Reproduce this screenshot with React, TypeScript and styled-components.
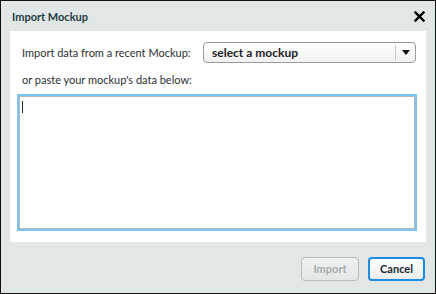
import React from 'react';
import styled, { createGlobalStyle } from 'styled-components';

const GlobalStyle = createGlobalStyle`
  html, body {
    margin: 0;
    padding: 0;
    background: #e1e6e6;
  }
  * {
    box-sizing: border-box;
  }
`;

const Dialog = styled.div`
  width: 436px;
  height: 294px;
  border: 1px solid #111;
  background: #e1e6e6;
  display: flex;
  flex-direction: column;
  font-family: Lato, "Open Sans", sans-serif;
  color: #1e2a2e;
`;

const Header = styled.div`
  height: 30px;
  display: flex;
  align-items: center;
  justify-content: space-between;
  padding: 0 10px 0 11px;
`;

const Title = styled.div`
  font-size: 11px;
  font-weight: 700;
  color: #1f3b44;
`;

const CloseButton = styled.button`
  border: none;
  background: none;
  padding: 0;
  width: 12px;
  height: 12px;
  display: flex;
  align-items: center;
  justify-content: center;
  cursor: pointer;
`;

const Panel = styled.div`
  margin: 0 9px;
  height: 211px;
  background: #fff;
  padding: 11px 7px 8px 7px;
  display: flex;
  flex-direction: column;
`;

const Row = styled.div`
  display: flex;
  align-items: center;
  justify-content: space-between;
  padding: 0 3px 0 5px;
  height: 21px;
`;

const Label = styled.div`
  font-size: 11px;
  color: #2a2f31;
`;

const Select = styled.div`
  width: 213px;
  height: 21px;
  border: 1px solid #9a9a9a;
  border-radius: 4px;
  background: linear-gradient(#ffffff, #f1f1f1);
  display: flex;
  align-items: center;
`;

const SelectText = styled.div`
  flex: 1;
  padding-left: 8px;
  font-size: 12px;
  font-weight: 700;
  color: #222;
`;

const SelectArrow = styled.div`
  width: 20px;
  height: 15px;
  border-left: 1px solid #c8c8c8;
  display: flex;
  align-items: center;
  justify-content: center;
`;

const Hint = styled(Label)`
  padding-left: 5px;
  margin-top: 10px;
  margin-bottom: 8px;
`;

const TextArea = styled.textarea`
  width: 400px;
  height: 137px;
  margin: 0;
  border: 2px solid #7cc5ee;
  box-shadow: inset 1px 1px 0 #b8b8b8, inset -1px -1px 0 #b8b8b8;
  outline: none;
  resize: none;
  padding: 3px 4px;
  font-family: Lato, sans-serif;
  font-size: 12px;
  caret-color: #000;
`;

const Caret = styled.div`
  position: absolute;
  left: 22px;
  top: 101px;
  width: 1px;
  height: 12px;
  background: #1a2a2a;
`;

const Footer = styled.div`
  flex: 1;
  display: flex;
  align-items: center;
  justify-content: flex-end;
  gap: 9px;
  padding: 2px 10px 0 0;
`;

const Button = styled.button<{ primary?: boolean }>`
  height: 24px;
  padding: 0;
  width: ${p => (p.primary ? '57px' : '58px')};
  border-radius: 4px;
  font-family: Lato, sans-serif;
  font-size: 11px;
  font-weight: 700;
  border: ${p => (p.primary ? '2px solid #1e8ce3' : '1px solid #b9bdbd')};
  color: ${p => (p.primary ? '#1c2a30' : '#a8acac')};
  background: ${p => (p.primary ? 'linear-gradient(#ffffff, #eaeded)' : 'linear-gradient(#eef1f1, #e3e7e7)')};
`;

const Wrap = styled.div`
  position: relative;
`;

export default function App() {
  return (
    <Wrap>
      <GlobalStyle />
      <Dialog>
        <Header>
          <Title>Import Mockup</Title>
          <CloseButton aria-label="close">
            <svg width="11" height="11" viewBox="0 0 11 11">
              <path d="M1.5 1.5 L9.5 9.5 M9.5 1.5 L1.5 9.5" stroke="#000" strokeWidth="2.4" strokeLinecap="square" />
            </svg>
          </CloseButton>
        </Header>
        <Panel>
          <Row>
            <Label>Import data from a recent Mockup:</Label>
            <Select>
              <SelectText>select a mockup</SelectText>
              <SelectArrow>
                <svg width="8" height="5" viewBox="0 0 8 5">
                  <path d="M0 0 H8 L4 5 Z" fill="#111" />
                </svg>
              </SelectArrow>
            </Select>
          </Row>
          <Hint>or paste your mockup's data below:</Hint>
          <TextArea defaultValue="" />
        </Panel>
        <Footer>
          <Button disabled>Import</Button>
          <Button primary>Cancel</Button>
        </Footer>
      </Dialog>
      <Caret />
    </Wrap>
  );
}
